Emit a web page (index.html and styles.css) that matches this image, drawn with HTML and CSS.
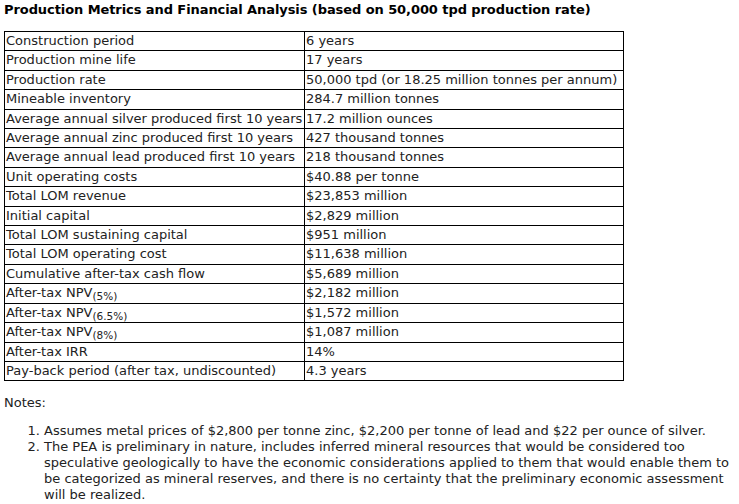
FILE: index.html
```html
<!DOCTYPE html>
<html>
<head>
<meta charset="utf-8">
<link rel="stylesheet" href="styles.css">
</head>
<body>
<div class="page">
  <p class="title">Production Metrics and Financial Analysis (based on 50,000 tpd production rate)</p>
  <table class="metrics">
    <colgroup><col class="col-label"><col class="col-value"></colgroup>
    <tr><td>Construction period</td><td>6 years</td></tr>
    <tr><td>Production mine life</td><td>17 years</td></tr>
    <tr><td>Production rate</td><td>50,000 tpd (or 18.25 million tonnes per annum)</td></tr>
    <tr><td>Mineable inventory</td><td>284.7 million tonnes</td></tr>
    <tr><td>Average annual silver produced first 10 years</td><td>17.2 million ounces</td></tr>
    <tr><td>Average annual zinc produced first 10 years</td><td>427 thousand tonnes</td></tr>
    <tr><td>Average annual lead produced first 10 years</td><td>218 thousand tonnes</td></tr>
    <tr><td>Unit operating costs</td><td>$40.88 per tonne</td></tr>
    <tr><td>Total LOM revenue</td><td>$23,853 million</td></tr>
    <tr><td>Initial capital</td><td>$2,829 million</td></tr>
    <tr><td>Total LOM sustaining capital</td><td>$951 million</td></tr>
    <tr><td>Total LOM operating cost</td><td>$11,638 million</td></tr>
    <tr><td>Cumulative after-tax cash flow</td><td>$5,689 million</td></tr>
    <tr><td>After-tax NPV<sub>(5%)</sub></td><td>$2,182 million</td></tr>
    <tr><td>After-tax NPV<sub>(6.5%)</sub></td><td>$1,572 million</td></tr>
    <tr><td>After-tax NPV<sub>(8%)</sub></td><td>$1,087 million</td></tr>
    <tr><td>After-tax IRR</td><td>14%</td></tr>
    <tr><td>Pay-back period (after tax, undiscounted)</td><td>4.3 years</td></tr>
  </table>
  <p class="notes-label">Notes:</p>
  <ol class="notes">
    <li>Assumes metal prices of $2,800 per tonne zinc, $2,200 per tonne of lead and $22 per ounce of silver.</li>
    <li>The PEA is preliminary in nature, includes inferred mineral resources that would be considered too speculative geologically to have the economic considerations applied to them that would enable them to be categorized as mineral reserves, and there is no certainty that the preliminary economic assessment will be realized.</li>
  </ol>
</div>
</body>
</html>
```
FILE: styles.css
```css
html, body {
  margin: 0;
  padding: 0;
  background: #fff;
}
.page {
  padding: 2px 4px 0 4px;
  font-family: Verdana, "DejaVu Sans", sans-serif;
  font-size: 13px;
  line-height: 16px;
  color: #222;
}
.title {
  margin: 0 0 13px 0;
  font-weight: bold;
  color: #000;
  letter-spacing: -0.08px;
}
.metrics {
  border-collapse: collapse;
  table-layout: fixed;
  width: 620px;
  margin: 0;
}
.col-label {
  width: 300px;
}
.metrics td {
  border: 1px solid #000;
  padding: 1px 0 1px 1px;
  line-height: 16.4px;
  vertical-align: top;
  white-space: nowrap;
  overflow: hidden;
}
.metrics sub {
  font-size: 10.5px;
  line-height: 0;
  vertical-align: -3px;
}
.notes-label {
  margin: 14px 0 0 0;
}
.notes {
  margin: 12px 0 0 0;
  padding-left: 40px;
}
```
